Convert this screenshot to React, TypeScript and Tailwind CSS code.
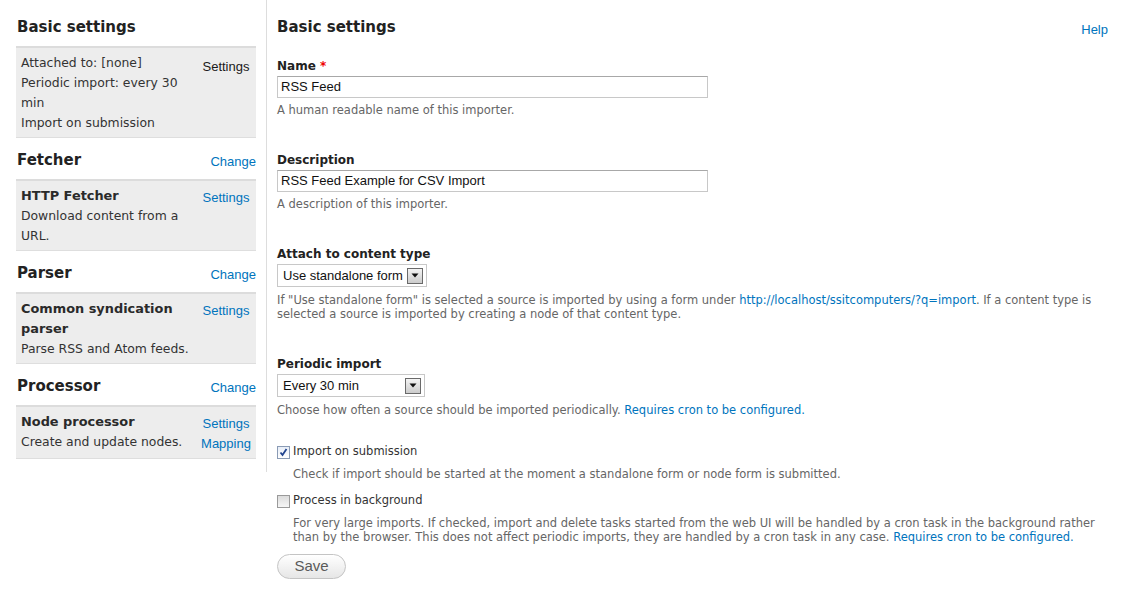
const sans = "font-['DejaVu_Sans',Verdana,sans-serif]";
const arial = "font-['Liberation_Sans',Arial,sans-serif]";

interface PluginBoxProps {
  title?: string;
  lines: string[];
  links: string[];
  plain?: boolean;
}

function PluginBox({ title, lines, links, plain }: PluginBoxProps) {
  return (
    <div className="flex gap-2 border-t-2 border-b border-t-[#dcdcdc] border-b-[#dedede] bg-[#ededed] pl-[5px] pr-[5px] pt-[5px] pb-[4px]">
      <div className="flex-1 text-[12.4px] leading-5 text-[#333]">
        {title && <div className="text-[12.9px] font-bold text-[#2a2a2a]">{title}</div>}
        {lines.map((l) => (
          <div key={l}>{l}</div>
        ))}
      </div>
      <div className={`w-[50px] shrink-0 text-center text-[13px] leading-5 ${plain ? 'pt-[4px]' : 'pt-[2px]'} ${arial}`}>
        {links.map((l) => (
          <div key={l} className={plain ? 'text-[#1a1a1a]' : 'text-[#0074bd]'}>
            {l}
          </div>
        ))}
      </div>
    </div>
  );
}

function SideHeading({ text, first }: { text: string; first?: boolean }) {
  return (
    <div className={`flex h-6 items-start justify-between mb-[7px] ${first ? '' : 'mt-[10px]'}`}>
      <h2 className="pl-px text-[15px] font-bold leading-6 text-[#222]">{text}</h2>
      {!first && <span className={`mt-[4px] text-[13px] leading-5 text-[#0074bd] ${arial}`}>Change</span>}
    </div>
  );
}

function SelectBox({ value, width }: { value: string; width: string }) {
  return (
    <div className={`flex h-[23px] items-center border border-[#c8c8c8] bg-white pl-[5px] pr-[3px] ${width}`}>
      <span className={`flex-1 text-[13px] text-[#111] ${arial}`}>{value}</span>
      <span className="flex h-4 w-4 items-center justify-center border border-[#6a6a6a] bg-gradient-to-b from-[#f4f4f4] to-[#cccccc]">
        <svg width="8" height="5" viewBox="0 0 8 5">
          <path d="M0.5 0.5 L7.5 0.5 L4 4.5 Z" fill="#111" />
        </svg>
      </span>
    </div>
  );
}

function Checkbox({ checked }: { checked?: boolean }) {
  return (
    <span
      className={`mr-[3px] flex h-[13px] w-[13px] shrink-0 items-center justify-center border ${
        checked ? 'border-[#8a9bb5] bg-gradient-to-b from-[#e8eef8] to-white' : 'border-[#9a9a9a] bg-gradient-to-b from-[#dcdcdc] to-[#f6f6f6]'
      }`}
    >
      {checked && (
        <svg width="9" height="9" viewBox="0 0 9 9">
          <path d="M1.5 4.5 L3.5 7 L7.5 1" stroke="#21448f" strokeWidth="1.8" fill="none" />
        </svg>
      )}
    </span>
  );
}

const desc = 'mt-[5px] text-[11.5px] leading-[14px] text-[#666]';
const label = 'mb-[2px] block text-[12px] font-bold leading-4 text-[#222]';
const linkCls = 'text-[#0074bd]';

export default function App() {
  return (
    <div className={`flex min-h-[591px] bg-white text-[#333] ${sans}`}>
      <aside className="w-[267px] shrink-0 self-start border-r border-[#dddddd] pl-4 pr-[10px] pt-[15px] pb-[13px]">
        <SideHeading text="Basic settings" first />
        <PluginBox
          lines={['Attached to: [none]', 'Periodic import: every 30 min', 'Import on submission']}
          links={['Settings']}
          plain
        />
        <SideHeading text="Fetcher" />
        <PluginBox title="HTTP Fetcher" lines={['Download content from a URL.']} links={['Settings']} />
        <SideHeading text="Parser" />
        <PluginBox title="Common syndication parser" lines={['Parse RSS and Atom feeds.']} links={['Settings']} />
        <SideHeading text="Processor" />
        <PluginBox title="Node processor" lines={['Create and update nodes.']} links={['Settings', 'Mapping']} />
      </aside>

      <main className="flex-1 pl-[10px] pr-[18px] pt-[15px]">
        <div className="mr-[5px] flex items-start justify-between">
          <h1 className="text-[15px] font-bold leading-6 text-[#222]">Basic settings</h1>
          <span className={`mt-[5px] text-[13px] leading-5 ${linkCls} ${arial}`}>Help</span>
        </div>

        <div className="mt-[18px] mb-[35px]">
          <label className={label}>
            Name <span className="text-[#e00]">*</span>
          </label>
          <div className={`flex h-[22px] w-[431px] items-center border border-[#c8c8c8] border-t-[#a8a8a8] px-[3px] text-[13px] text-[#111] ${arial}`}>
            RSS Feed
          </div>
          <div className={desc}>A human readable name of this importer.</div>
        </div>

        <div className="mb-[35px]">
          <label className={label}>Description</label>
          <div className={`flex h-[22px] w-[431px] items-center border border-[#c8c8c8] border-t-[#a8a8a8] px-[3px] text-[13px] text-[#111] ${arial}`}>
            RSS Feed Example for CSV Import
          </div>
          <div className={desc}>A description of this importer.</div>
        </div>

        <div className="mb-[35px]">
          <label className={label}>Attach to content type</label>
          <SelectBox value="Use standalone form" width="w-[150px]" />
          <p className={`${desc} mt-[6px]`}>
            If "Use standalone form" is selected a source is imported by using a form under{' '}
            <a className={linkCls}>http://localhost/ssitcomputers/?q=import</a>. If a content type is selected a
            source is imported by creating a node of that content type.
          </p>
        </div>

        <div className="mb-[27px]">
          <label className={label}>Periodic import</label>
          <SelectBox value="Every 30 min" width="w-[148px]" />
          <p className={`${desc} mt-[6px]`}>
            Choose how often a source should be imported periodically.{' '}
            <a className={linkCls}>Requires cron to be configured.</a>
          </p>
        </div>

        <div className="mb-[12px]">
          <div className="flex h-4 items-center text-[11.5px] text-[#333]">
            <Checkbox checked />
            Import on submission
          </div>
          <p className={`${desc} mt-[7px] pl-4`}>
            Check if import should be started at the moment a standalone form or node form is submitted.
          </p>
        </div>

        <div className="mb-[10px]">
          <div className="flex h-4 items-center text-[11.5px] text-[#333]">
            <Checkbox />
            Process in background
          </div>
          <p className={`${desc} mt-[7px] pl-4`}>
            For very large imports. If checked, import and delete tasks started from the web UI will be handled by a
            cron task in the background rather than by the browser. This does not affect periodic imports, they are
            handled by a cron task in any case. <a className={linkCls}>Requires cron to be configured.</a>
          </p>
        </div>

        <button
          className={`h-[25px] w-[69px] rounded-full border border-[#c4c4c4] bg-gradient-to-b from-white to-[#e6e6e6] text-[15px] text-[#5a5a5a] ${arial}`}
        >
          Save
        </button>
      </main>
    </div>
  );
}
